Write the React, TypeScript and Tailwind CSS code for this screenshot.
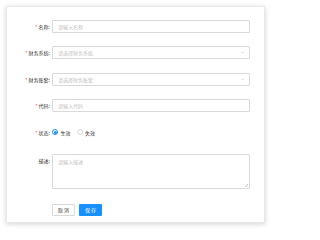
import { ChevronDown } from 'lucide-react';

const font = { fontFamily: '"Noto Sans CJK SC", "Noto Sans", sans-serif' };

function Label({ text, required }: { text: string; required?: boolean }) {
  return (
    <div className="w-[43px] shrink-0 flex justify-end items-center text-[5px] leading-none text-[#333]">
      {required && <span className="text-[#ff4d4f] mr-[1px]">*</span>}
      <span>{text}:</span>
    </div>
  );
}

function TextInput({ placeholder }: { placeholder: string }) {
  return (
    <div className="w-[198px] h-[13px] border border-[#d9d9d9] rounded-[1px] bg-white flex items-center px-[5px] text-[5px] leading-none text-[#bfbfbf]">
      {placeholder}
    </div>
  );
}

function SelectInput({ placeholder }: { placeholder: string }) {
  return (
    <div className="w-[198px] h-[13px] border border-[#d9d9d9] rounded-[1px] bg-white flex items-center justify-between pl-[5px] pr-[4px] text-[5px] leading-none text-[#bfbfbf]">
      <span>{placeholder}</span>
      <ChevronDown className="w-[5px] h-[5px] text-[#bfbfbf]" strokeWidth={2.5} />
    </div>
  );
}

function Row({ children }: { children: React.ReactNode }) {
  return <div className="flex items-center gap-[2px] h-[13px]">{children}</div>;
}

export default function App() {
  return (
    <div className="w-[272px] h-[230px] bg-white pt-[6px] pl-[6px]" style={font}>
      <div className="w-[259px] h-[217px] bg-white border border-[#e8e8e8] shadow-[0_1px_5px_rgba(0,0,0,0.18)] pt-[13px]">
        <div className="flex flex-col">
          <Row>
            <Label text="名称" required />
            <TextInput placeholder="请输入名称" />
          </Row>
          <div className="mt-[13px]">
            <Row>
              <Label text="财务系统" required />
              <SelectInput placeholder="请选择财务系统" />
            </Row>
          </div>
          <div className="mt-[13.5px]">
            <Row>
              <Label text="财务账套" required />
              <SelectInput placeholder="请选择财务账套" />
            </Row>
          </div>
          <div className="mt-[13.5px]">
            <Row>
              <Label text="代码" required />
              <TextInput placeholder="请输入代码" />
            </Row>
          </div>
          <div className="mt-[13.5px]">
            <Row>
              <Label text="状态" required />
              <div className="flex items-center text-[5px] leading-none text-[#333]">
                <span className="w-[6px] h-[6px] rounded-full border border-[#1890ff] flex items-center justify-center mr-[2.5px]">
                  <span className="w-[3px] h-[3px] rounded-full bg-[#1890ff]" />
                </span>
                <span className="mr-[6px]">生效</span>
                <span className="w-[6px] h-[6px] rounded-full border border-[#d9d9d9] bg-white mr-[2.5px]" />
                <span>失效</span>
              </div>
            </Row>
          </div>
          <div className="mt-[15px] flex gap-[2px]">
            <div className="w-[43px] shrink-0 flex justify-end pt-[4px] text-[5px] leading-none text-[#333]">
              描述:
            </div>
            <div className="relative w-[198px] h-[35px] border border-[#d9d9d9] rounded-[1px] bg-white px-[5px] pt-[4px] text-[5px] leading-none text-[#bfbfbf]">
              请输入描述
              <svg className="absolute right-[1px] bottom-[1px] w-[3px] h-[3px]" viewBox="0 0 6 6">
                <path d="M6 0 L0 6 M6 3 L3 6" stroke="#999" strokeWidth="1" />
              </svg>
            </div>
          </div>
          <div className="mt-[15px] flex gap-[4px] pl-[45px]">
            <button className="w-[23px] h-[12px] border border-[#d9d9d9] rounded-[1px] bg-white text-[5px] leading-none text-[#333] flex items-center justify-center">
              取 消
            </button>
            <button className="w-[23px] h-[12px] rounded-[1px] bg-[#1890ff] text-[5px] leading-none text-white flex items-center justify-center">
              保 存
            </button>
          </div>
        </div>
      </div>
    </div>
  );
}
